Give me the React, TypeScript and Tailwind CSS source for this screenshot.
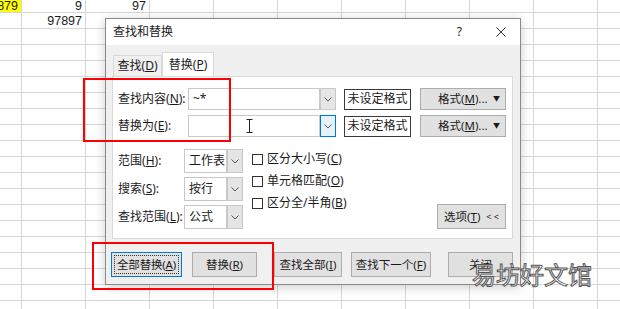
import React from "react";

function Chevron() {
    return (
        <svg width="8" height="5" viewBox="0 0 8 5" fill="none">
            <polyline points="0.5,0.5 4,4 7.5,0.5" stroke="#555" strokeWidth="1" />
        </svg>
    );
}

function Key({ k }: { k: string }) {
    return (
        <>
            (<u>{k}</u>)
        </>
    );
}

function Combo({ text, focused }: { text?: string; focused?: boolean }) {
    return (
        <div className="flex w-[148px] h-[22px]">
            <div className="flex-1 border border-[#c8c8c8] bg-white flex items-center pl-[4px] text-[12px]">{text}</div>
            <div
                className={
                    focused
                        ? "w-[16px] border border-[#0078d7] bg-[#e5f1fb] flex items-center justify-center"
                        : "w-[16px] border border-[#c8c8c8] bg-[#e5e5e5] flex items-center justify-center"
                }
            >
                <Chevron />
            </div>
        </div>
    );
}

function Select({ text }: { text: string }) {
    return (
        <div className="flex w-[59px] h-[24px]">
            <div className="flex-1 border border-[#c8c8c8] bg-white flex items-center pl-[4px] text-[12px]">{text}</div>
            <div className="w-[16px] border border-[#c8c8c8] bg-[#e5e5e5] flex items-center justify-center">
                <Chevron />
            </div>
        </div>
    );
}

function Check({ children }: { children: React.ReactNode }) {
    return (
        <div className="flex items-center h-[22px]">
            <div className="w-[11px] h-[11px] border border-[#333] bg-white" />
            <span className="ml-[4px] text-[12px] whitespace-nowrap">{children}</span>
        </div>
    );
}

function Btn({ children, className }: { children: React.ReactNode; className: string }) {
    return (
        <div className={"h-[25px] bg-[#e1e1e1] border border-[#adadad] flex items-center justify-center text-[11.5px] whitespace-nowrap " + className}>
            {children}
        </div>
    );
}

function FormatBtn() {
    return (
        <div className="ml-[9px] w-[86px] h-[22px] bg-[#e1e1e1] border border-[#adadad] flex items-center pl-[17px] whitespace-nowrap text-[11.5px]">
            格式<Key k="M" />...
            <span className="ml-auto mr-[5px] text-[7px]">▼</span>
        </div>
    );
}

export default function App() {
    return (
        <div className="relative w-[620px] h-[309px] overflow-hidden bg-white text-[#1a1a1a] font-['Noto_Sans','Noto_Sans_CJK_SC',sans-serif]">
            {/* Sheet grid */}
            <div className="w-full h-full bg-[linear-gradient(to_right,#d6d6d6_1px,transparent_1px),linear-gradient(to_bottom,#d6d6d6_1px,transparent_1px)] bg-[size:64px_16px] bg-[position:21px_12px]">
                <div className="ml-[-43px] flex flex-col font-['Liberation_Sans',sans-serif] text-[12.5px] leading-[12px]">
                    <div className="flex h-[12px]">
                        <div className="w-[64px] pl-[1px]">
                            <div className="h-[12px] bg-[#ffff00] flex items-end justify-end pr-[3px]">3879</div>
                        </div>
                        <div className="w-[64px] flex items-end justify-end pr-[3px]">9</div>
                        <div className="w-[64px] flex items-end justify-end pr-[3px]">97</div>
                    </div>
                    <div className="flex h-[16px]">
                        <div className="w-[64px]" />
                        <div className="w-[64px] flex items-end justify-end pr-[3px] pb-[1px]">97897</div>
                    </div>
                </div>
            </div>

            {/* Dialog */}
            <div className="absolute left-[105px] top-[18px] w-[416px] h-[267px] border border-[#8a8a8a] bg-[#f0f0f0] shadow-[0_2px_10px_rgba(0,0,0,0.2)] flex flex-col">
                <div className="h-[26px] bg-white flex items-center pl-[7px] text-[12px]">
                    <span>查找和替换</span>
                    <span className="ml-auto text-[12px] mr-[34px]">?</span>
                    <svg width="10" height="10" viewBox="0 0 10 10" className="mr-[14px]">
                        <path d="M0.5 0.5 L9.5 9.5 M9.5 0.5 L0.5 9.5" stroke="#333" strokeWidth="1" />
                    </svg>
                </div>

                <div className="pt-[8px]">
                    {/* Tabs */}
                    <div className="flex h-[23px] pl-[7px] text-[12px]">
                        <div className="w-[49px] mt-[2px] border border-b-0 border-[#d9d9d9] flex items-center justify-center whitespace-nowrap">
                            查找<Key k="D" />
                        </div>
                        <div className="relative z-10 w-[52px] h-[24px] -mt-[1px] bg-white border border-b-0 border-[#d9d9d9] flex items-center justify-center whitespace-nowrap">
                            替换<Key k="P" />
                        </div>
                    </div>

                    {/* Panel */}
                    <div className="ml-[6px] w-[401px] h-[163px] bg-white border border-[#d9d9d9] pl-[5px] pt-[11px] pr-[6px] text-[12px]">
                        <div className="flex items-center h-[22px]">
                            <div className="w-[70px] whitespace-nowrap">查找内容<Key k="N" />:</div>
                            <Combo text="~*" />
                            <div className="ml-[8px] w-[67px] h-[21px] border-[1.5px] border-[#3a3a3a] flex items-center justify-center">未设定格式</div>
                            <FormatBtn />
                        </div>
                        <div className="flex items-center h-[22px] mt-[5px]">
                            <div className="w-[70px] whitespace-nowrap">替换为<Key k="E" />:</div>
                            <div className="relative">
                                <Combo focused />
                                <svg width="7" height="14" viewBox="0 0 7 14" className="absolute left-[58px] top-[4px]">
                                    <path d="M0.5 0.5 H6.5 M3.5 0.5 V13.5 M0.5 13.5 H6.5" stroke="#222" strokeWidth="1" fill="none" />
                                </svg>
                            </div>
                            <div className="ml-[8px] w-[67px] h-[21px] border-[1.5px] border-[#3a3a3a] flex items-center justify-center">未设定格式</div>
                            <FormatBtn />
                        </div>

                        <div className="flex mt-[12px] h-[80px]">
                            <div className="flex flex-col gap-[4px]">
                                <div className="flex items-center h-[24px]">
                                    <div className="w-[66px] whitespace-nowrap">范围<Key k="H" />:</div>
                                    <Select text="工作表" />
                                </div>
                                <div className="flex items-center h-[24px]">
                                    <div className="w-[66px] whitespace-nowrap">搜索<Key k="S" />:</div>
                                    <Select text="按行" />
                                </div>
                                <div className="flex items-center h-[24px]">
                                    <div className="w-[66px] whitespace-nowrap">查找范围<Key k="L" />:</div>
                                    <Select text="公式" />
                                </div>
                            </div>
                            <div className="ml-[9px] mt-[-1px] flex flex-col">
                                <Check>区分大小写<Key k="C" /></Check>
                                <Check>单元格匹配<Key k="O" /></Check>
                                <Check>区分全/半角<Key k="B" /></Check>
                            </div>
                            <div className="ml-auto self-end w-[69px] h-[25px] bg-[#e1e1e1] border border-[#adadad] flex items-center justify-center whitespace-nowrap text-[11.5px]">
                                选项<Key k="T" />
                                <span className="ml-[6px] text-[9px]">&lt; &lt;</span>
                            </div>
                        </div>
                    </div>

                    {/* Buttons */}
                    <div className="flex mt-[13px] pl-[5px]">
                        <div className="w-[71px] h-[25px] bg-[#e1e1e1] border border-[#0078d7] p-[2px]">
                            <div className="w-full h-full border border-dotted border-[#333] flex items-center justify-center text-[11.5px] whitespace-nowrap tracking-[-0.2px]">
                                全部替换<Key k="A" />
                            </div>
                        </div>
                        <Btn className="ml-[10px] w-[65px]">替换<Key k="R" /></Btn>
                        <Btn className="ml-[17px] w-[68px]">查找全部<Key k="I" /></Btn>
                        <Btn className="ml-[9px] w-[80px]">查找下一个<Key k="F" /></Btn>
                        <Btn className="ml-[17px] w-[65px]">关闭</Btn>
                    </div>
                </div>
            </div>

            {/* Red highlight boxes */}
            <div className="absolute left-[83px] top-[78px] w-[148px] h-[64px] border-2 border-[#ff0000]" />
            <div className="absolute left-[92px] top-[242px] w-[182px] h-[48px] border-2 border-[#ff0000]" />

            {/* Watermark */}
            <div className="absolute left-[472px] top-[258px] text-[24px] leading-[32px] text-white [-webkit-text-stroke:1px_#555] font-['Noto_Sans_CJK_SC',sans-serif]">
                易坊好文馆
            </div>
        </div>
    );
}
